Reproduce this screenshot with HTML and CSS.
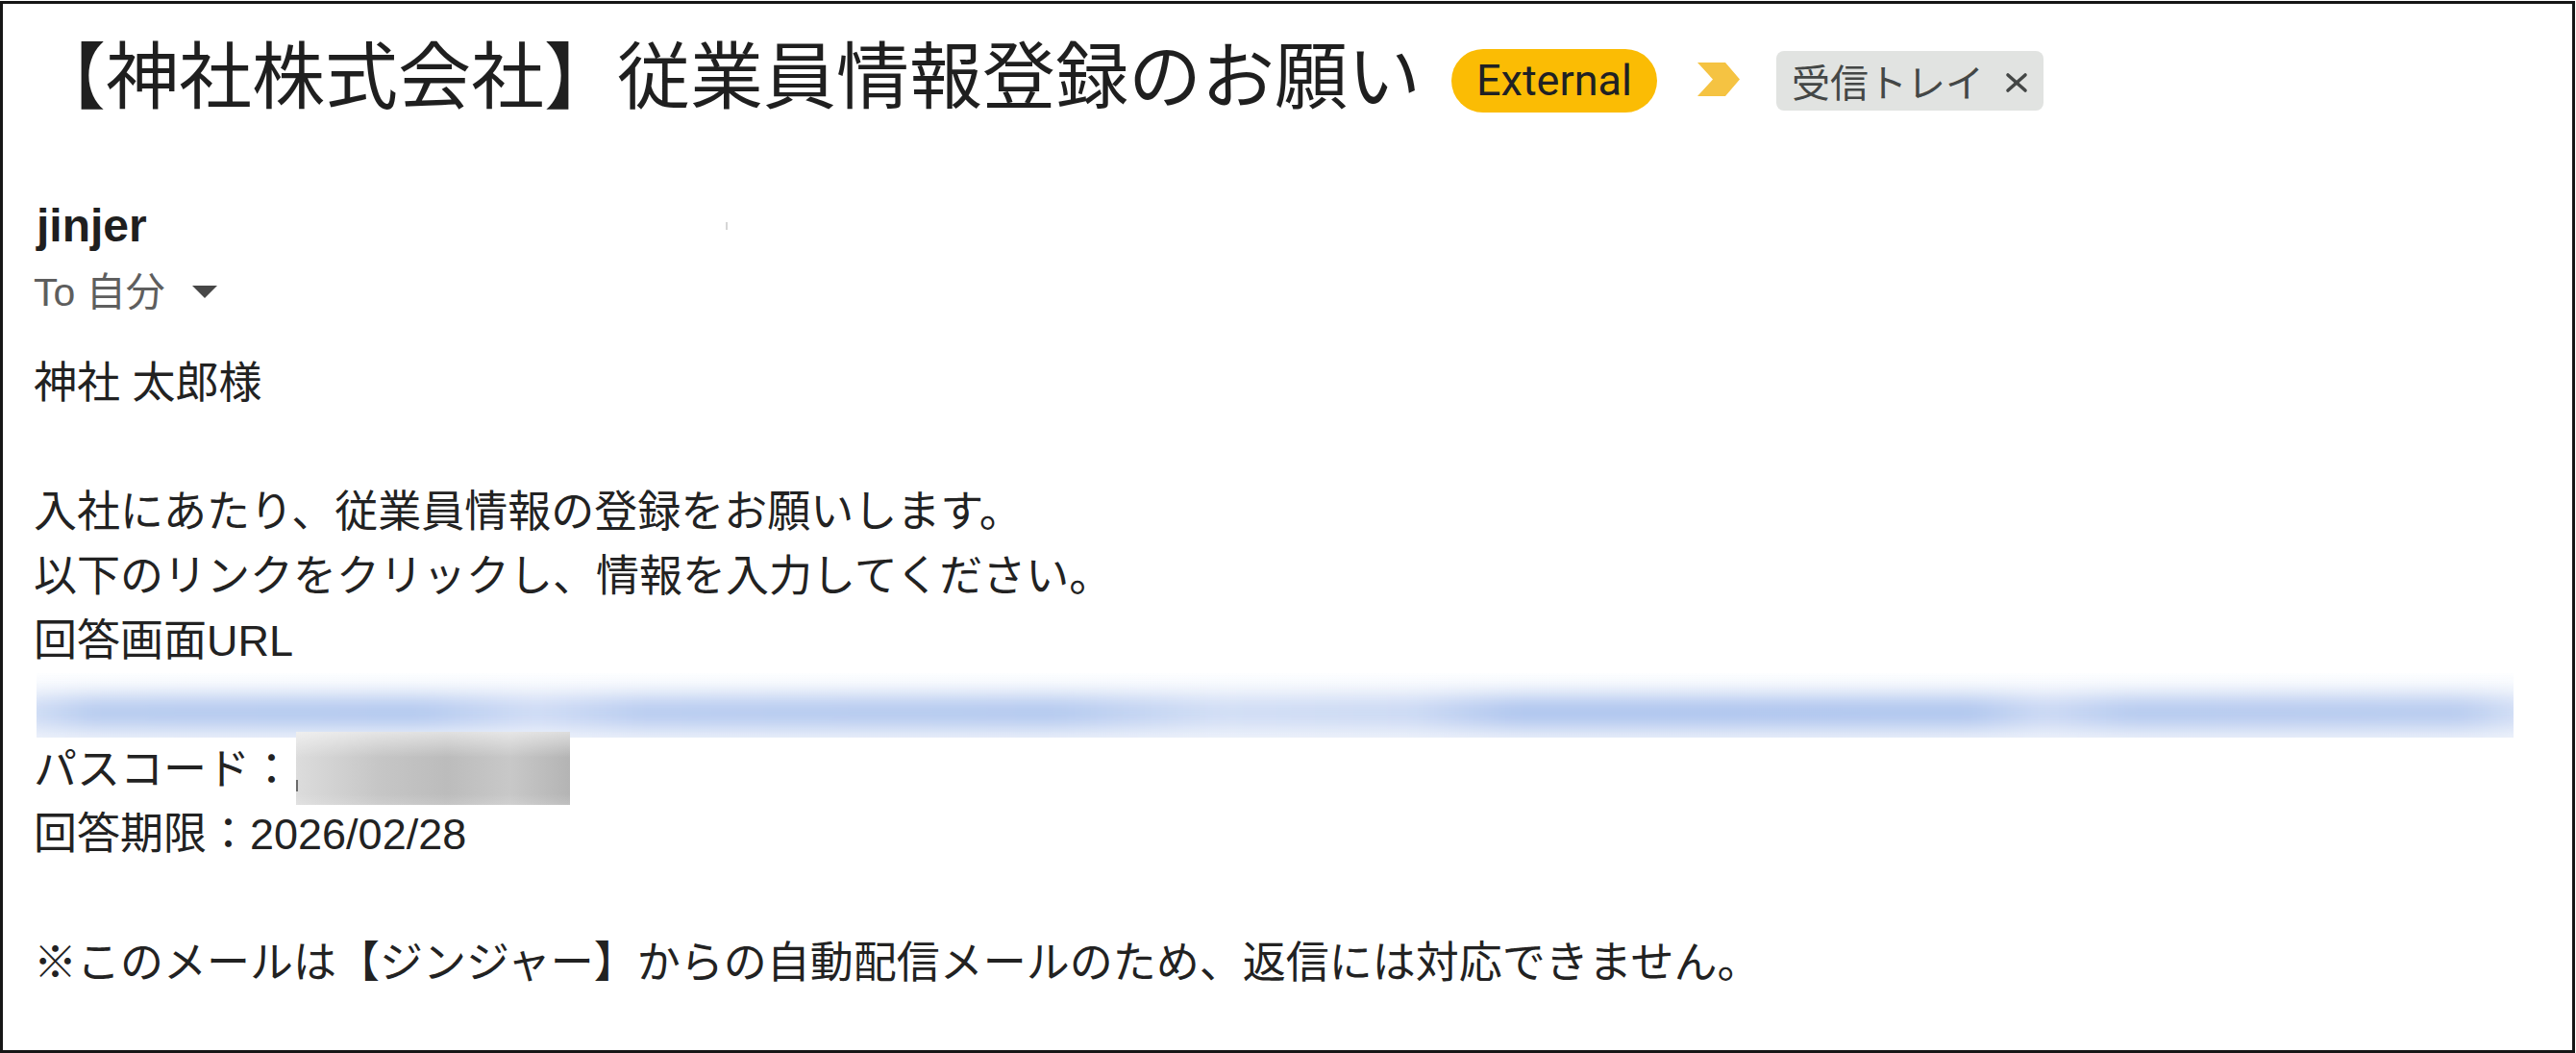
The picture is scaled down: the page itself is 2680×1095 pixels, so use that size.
FILE: index.html
```html
<!DOCTYPE html>
<html lang="ja">
<head>
<meta charset="utf-8">
<title>【神社株式会社】従業員情報登録のお願い</title>
<link rel="stylesheet" href="styles.css">
</head>
<body>
<div class="frame">
  <div class="subject-row">
    <h1 class="subject">【神社株式会社】従業員情報登録のお願い</h1>
    <span class="badge-external">External</span>
    <svg class="chevron" viewBox="0 0 44 35" aria-hidden="true"><polygon points="0,0 29,0 44,17.5 29,35 0,35 16,17.5"/></svg>
    <span class="label-inbox">受信トレイ<svg class="label-x" viewBox="0 0 26 22" aria-hidden="true"><line x1="4" y1="3" x2="22" y2="19"/><line x1="22" y1="3" x2="4" y2="19"/></svg></span>
  </div>
  <div class="sender">
    <div class="sender-name">jinjer<span class="addr-trace"></span></div>
    <div class="recipient">To 自分<svg class="caret" viewBox="0 0 26 13" aria-hidden="true"><polygon points="0,0 26,0 13,13"/></svg></div>
  </div>
  <div class="message">
    <div class="line">神社 太郎様</div>
    <div class="line"></div>
    <div class="line">入社にあたり、従業員情報の登録をお願いします。</div>
    <div class="line">以下のリンクをクリックし、情報を入力してください。</div>
    <div class="line">回答画面URL</div>
    <div class="url-blur"><div class="url-blur-inner"></div></div>
    <div class="line">パスコード：<span class="pass-mask"><span class="pass-trace"></span></span></div>
    <div class="line">回答期限：2026/02/28</div>
    <div class="line"></div>
    <div class="line">※このメールは【ジンジャー】からの自動配信メールのため、返信には対応できません。</div>
  </div>
</div>
</body>
</html>
```
FILE: styles.css
```css
html, body {
  margin: 0;
  background: #ffffff;
}

.frame {
  margin-top: 1px;
  width: 2679px;
  height: 1094px;
  box-sizing: border-box;
  border: 3px solid #161616;
  padding: 15px 0 0 32px;
  overflow: hidden;
  font-family: "Liberation Sans", "Noto Sans CJK JP", sans-serif;
  background: #ffffff;
}

/* subject row */
.subject-row {
  display: flex;
  align-items: flex-start;
  height: 110px;
}

.subject {
  margin: 0 0 0 -1px;
  font: 400 76px/110px "Noto Sans CJK JP", sans-serif;
  color: #1f1f1f;
  white-space: nowrap;
}

.badge-external {
  margin: 32px 0 0 32px;
  height: 66px;
  padding: 0 26px;
  border-radius: 33px;
  background: #fbbc04;
  font: 400 45px/66px Roboto, "Liberation Sans", sans-serif;
  color: #202124;
  white-space: nowrap;
}

.chevron {
  margin: 46px 0 0 42px;
  width: 44px;
  height: 35px;
  flex: none;
  fill: #f5c342;
}

.label-inbox {
  margin: 34px 0 0 38px;
  height: 62px;
  display: flex;
  align-items: center;
  padding: 0 15px 0 16px;
  background: #e1e3e1;
  border-radius: 8px;
  font: 400 40px/62px "Noto Sans CJK JP", sans-serif;
  color: #444746;
  white-space: nowrap;
}

.label-x {
  width: 26px;
  height: 22px;
  margin: 4px 0 0 21px;
  stroke: #444746;
  stroke-width: 3.6;
  stroke-linecap: round;
}

/* sender */
.sender-name {
  margin: 78px 0 0 3px;
  font: 700 48px/56px "Liberation Sans", sans-serif;
  color: #1f1f1f;
  white-space: nowrap;
}

.addr-trace {
  display: inline-block;
  width: 2px;
  height: 8px;
  margin-left: 602px;
  vertical-align: 12px;
  background: #d6d6d6;
}

.recipient {
  margin-top: 13px;
  font: 400 41px/56px "Liberation Sans", "Noto Sans CJK JP", sans-serif;
  color: #5e5e5e;
  white-space: nowrap;
}

.caret {
  width: 26px;
  height: 13px;
  margin-left: 28px;
  vertical-align: 8px;
  fill: #474747;
}

/* message body */
.message {
  margin-top: 33px;
  font-size: 45px;
  line-height: 67px;
  color: #222222;
}

.line {
  height: 67px;
  white-space: nowrap;
}

.url-blur {
  width: 2577px;
  height: 67px;
  margin-left: 3px;
  overflow: hidden;
  background: linear-gradient(to bottom, #fdfeff 0%, #f3f6fc 100%);
}

.url-blur-inner {
  height: 34px;
  margin: 24px -20px 0;
  background: linear-gradient(to right,
    #d2def5 0px,
    #b3c8ee 80px,
    #b0c6ee 420px,
    #ccd9f4 540px,
    #b5c9ef 650px,
    #b0c6ee 1080px,
    #cedbf4 1250px,
    #c9d7f3 1450px,
    #abc2ed 1560px,
    #acc3ed 2030px,
    #c8d6f3 2110px,
    #b2c7ee 2200px,
    #b4c8ee 2540px,
    #d6e1f6 2620px);
  filter: blur(11px);
}

.pass-mask {
  display: inline-block;
  position: relative;
  width: 285px;
  height: 76px;
  margin: -6px 0 -10px 3px;
  vertical-align: top;
  background:
    linear-gradient(to bottom, rgba(255,255,255,0.55) 0%, rgba(255,255,255,0) 35%, rgba(255,255,255,0) 85%, rgba(255,255,255,0.15) 100%),
    linear-gradient(to right, #dcdcdc 0%, #c6c6c6 30%, #bcbcbc 55%, #c8c8c8 78%, #b4b4b4 100%);
}

.pass-trace {
  position: absolute;
  left: 0;
  top: 50px;
  width: 2px;
  height: 12px;
  background: #6a6a6a;
}
```
